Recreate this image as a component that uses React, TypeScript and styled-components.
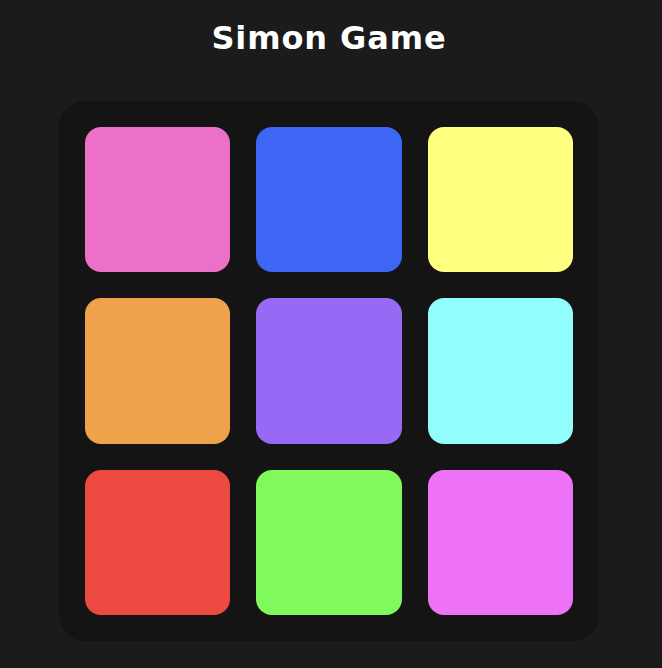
import React from "react";
import styled, { createGlobalStyle } from "styled-components";

const Global = createGlobalStyle`
  html, body {
    margin: 0;
    padding: 0;
    background: #1b1b1b;
  }
  body {
    font-family: "DejaVu Sans", "Inter", sans-serif;
  }
`;

const Page = styled.main`
  display: flex;
  flex-direction: column;
  align-items: center;
  min-height: 668px;
  padding: 16px 4px 0 0;
  box-sizing: border-box;
`;

const Title = styled.h1`
  margin: 0;
  color: #ffffff;
  font-family: "DejaVu Sans", "Inter", sans-serif;
  font-weight: 700;
  font-size: 32px;
  line-height: 44px;
  letter-spacing: 0.9px;
`;

const Board = styled.div`
  margin-top: 41px;
  width: 540px;
  height: 540px;
  box-sizing: border-box;
  padding: 26px;
  background: #141414;
  border-radius: 26px;
  display: grid;
  grid-template-columns: repeat(3, 1fr);
  grid-template-rows: repeat(3, 1fr);
  gap: 26px;
`;

const Tile = styled.button<{ $color: string }>`
  border: none;
  padding: 0;
  border-radius: 16px;
  background: ${(p) => p.$color};
  cursor: pointer;
`;

const colors = [
  "#ec70c7",
  "#3d66f4",
  "#ffff80",
  "#f0a14c",
  "#9769f5",
  "#91fdfd",
  "#ec4a40",
  "#80fa5b",
  "#ee72f8",
];

export default function App() {
  return (
    <>
      <Global />
      <Page>
        <Title>Simon Game</Title>
        <Board>
          {colors.map((c, i) => (
            <Tile key={i} $color={c} aria-label={`tile ${i + 1}`} />
          ))}
        </Board>
      </Page>
    </>
  );
}
